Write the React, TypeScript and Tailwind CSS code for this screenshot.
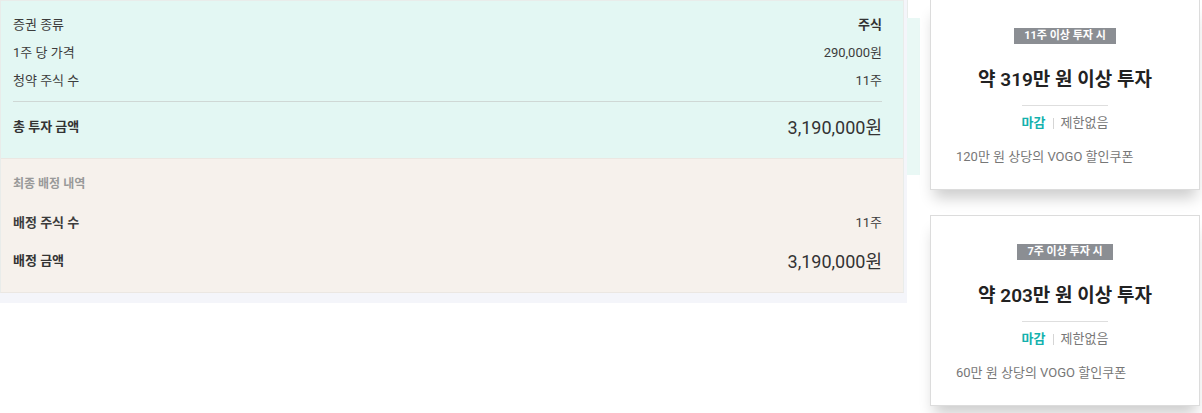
import React from "react";

const font = { fontFamily: "Roboto, 'Noto Sans CJK KR', 'Noto Sans', sans-serif" };

function Row({ label, value, bold }: { label: string; value: string; bold?: boolean }) {
  return (
    <div className="flex h-[28px] items-center justify-between">
      <span className={`text-[13px] ${bold ? "font-semibold text-[#333]" : "text-[#3c3c3c]"}`}>{label}</span>
      <span className={`text-[13px] ${bold ? "font-medium text-[#333]" : "text-[#3c3c3c]"}`}>{value}</span>
    </div>
  );
}

function Card({ badge, title, coupon, top }: { badge: string; title: string; coupon: string; top?: boolean }) {
  return (
    <div
      className={`w-[270px] bg-white border border-[#dcdcdc] shadow-[0_12px_14px_-4px_rgba(0,0,0,0.2)] px-[25px] ${
        top ? "border-t-0 h-[190px] pt-[28px]" : "h-[191px] pt-[28px]"
      }`}
    >
      <div className="flex justify-center">
        <span className="h-[16px] px-[10px] bg-[#8b8e93] text-white text-[11px] font-bold leading-[16px]">{badge}</span>
      </div>
      <div className="mt-[23px] text-center text-[19px] leading-[26px] font-semibold text-[#222]">{title}</div>
      <div className="mx-auto mt-[12px] h-px w-[86px] bg-[#dedede]" />
      <div className="mt-[8px] flex items-center justify-center h-[18px] text-[13px]">
        <span className="font-bold text-[#14b1ad]">마감</span>
        <span className="mx-[7px] h-[11px] w-px bg-[#d5d5d5]" />
        <span className="text-[#777]">제한없음</span>
      </div>
      <div className="mt-[16px] h-[18px] leading-[18px] text-[13px] text-[#777]">{coupon}</div>
    </div>
  );
}

export default function App() {
  return (
    <div className="w-[1202px] h-[413px] bg-white flex overflow-hidden" style={font}>
      <div className="w-[907px] h-[303px] bg-[#f4f5fa] shrink-0">
        <div className="w-[904px] border border-[#e9ecea] border-b-[#ebe7e2]">
          <div className="bg-[#e3f7f3] pl-[12px] pr-[21px] pt-[10px] pb-[16px]">
            <div className="flex h-[28px] items-center justify-between">
              <span className="text-[13px] text-[#3c3c3c]">증권 종류</span>
              <span className="text-[13px] font-semibold text-[#333]">주식</span>
            </div>
            <Row label="1주 당 가격" value="290,000원" />
            <Row label="청약 주식 수" value="11주" />
            <div className="mt-[6px] h-px bg-[#cfd8d5]" />
            <div className="mt-[10px] flex h-[30px] items-center justify-between">
              <span className="text-[13px] font-bold text-[#333]">총 투자 금액</span>
              <span className="text-[18px] text-[#333]">3,190,000원</span>
            </div>
          </div>
          <div className="bg-[#f6f1ec] border-t border-[#ebe7e2] pl-[12px] pr-[21px] pt-[16px] pb-[16px]">
            <div className="h-[18px] flex items-center text-[12px] font-bold text-[#999]">최종 배정 내역</div>
            <div className="mt-[16px] flex h-[28px] items-center justify-between">
              <span className="text-[13px] font-semibold text-[#3c3c3c]">배정 주식 수</span>
              <span className="text-[13px] text-[#3c3c3c]">11주</span>
            </div>
            <div className="mt-[9px] flex h-[30px] items-center justify-between">
              <span className="text-[13px] font-bold text-[#333]">배정 금액</span>
              <span className="text-[18px] text-[#333]">3,190,000원</span>
            </div>
          </div>
        </div>
      </div>
      <div className="w-[23px] shrink-0 flex flex-col">
        <div className="w-[13px] h-[18px] bg-white border-l border-[#e8ecea]" />
        <div className="w-[13px] h-[157px] bg-[#e9f8f5]" />
      </div>
      <div className="flex flex-col gap-[25px]">
        <Card top badge="11주 이상 투자 시" title="약 319만 원 이상 투자" coupon="120만 원 상당의 VOGO 할인쿠폰" />
        <Card badge="7주 이상 투자 시" title="약 203만 원 이상 투자" coupon="60만 원 상당의 VOGO 할인쿠폰" />
      </div>
    </div>
  );
}
